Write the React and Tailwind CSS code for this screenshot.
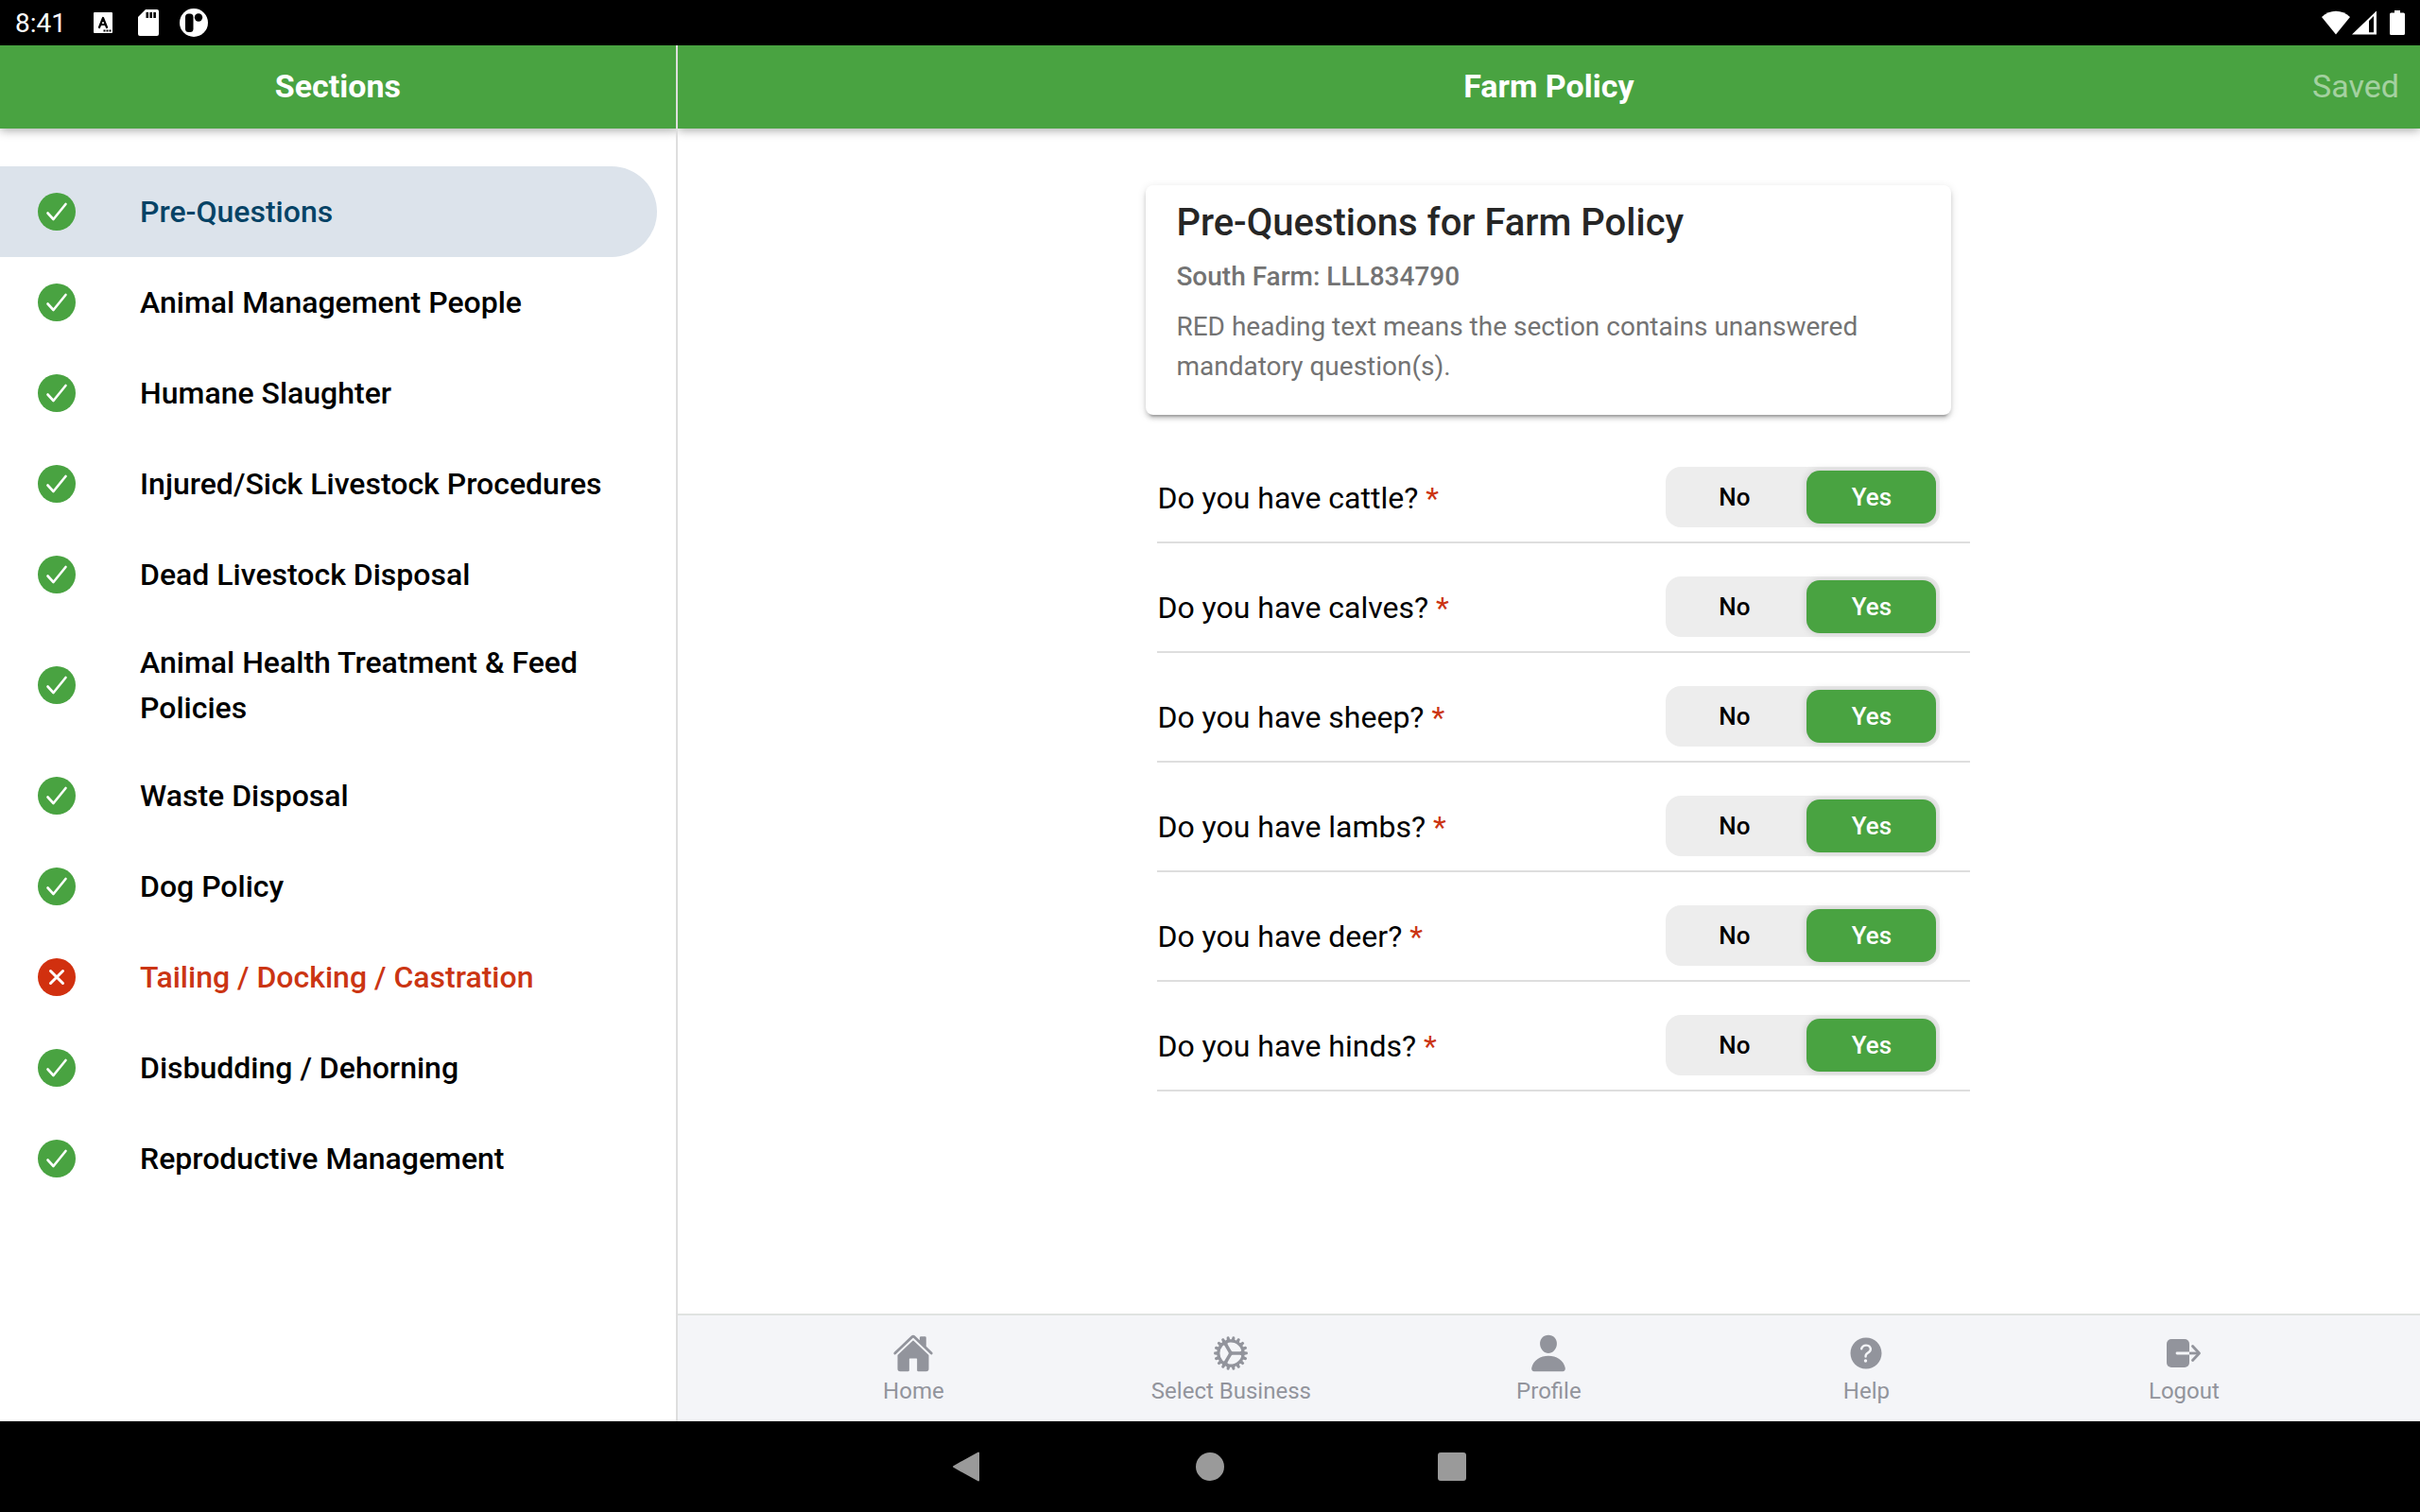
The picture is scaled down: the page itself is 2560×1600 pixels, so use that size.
import React, { useState } from 'react';
import { IoHome, IoCog, IoPerson, IoHelpCircle } from 'react-icons/io5';

const sections = [
  { name: 'Pre-Questions', complete: true },
  { name: 'Animal Management People', complete: true },
  { name: 'Humane Slaughter', complete: true },
  { name: 'Injured/Sick Livestock Procedures', complete: true },
  { name: 'Dead Livestock Disposal', complete: true },
  { name: 'Animal Health Treatment & Feed Policies', complete: true },
  { name: 'Waste Disposal', complete: true },
  { name: 'Dog Policy', complete: true },
  { name: 'Tailing / Docking / Castration', complete: false },
  { name: 'Disbudding / Dehorning', complete: true },
  { name: 'Reproductive Management', complete: true },
];

const animals = ['cattle', 'calves', 'sheep', 'lambs', 'deer', 'hinds'];

const LogoutIcon = ({ className }) => (
  <svg viewBox="0 0 44 44" className={className} fill="none" stroke="currentColor" strokeWidth="2.8" strokeLinecap="round" strokeLinejoin="round">
    <rect x="4" y="7" width="24" height="30" rx="5" fill="currentColor" stroke="none" />
    <path d="M15 22h13" stroke="#f4f5f8" />
    <path d="M28 22h10" strokeLinecap="butt" />
    <path d="M31.500 14.500l7 7.500l-7 7.500" />
  </svg>
);

const tabs = [
  { label: 'Home', icon: IoHome },
  { label: 'Select Business', icon: IoCog },
  { label: 'Profile', icon: IoPerson },
  { label: 'Help', icon: IoHelpCircle },
  { label: 'Logout', icon: LogoutIcon },
];

const StatusBar = () => (
  <div className="flex h-12 items-center justify-between bg-black px-4 text-white">
    <div className="flex items-center">
      <span className="w-[83px] pt-0.5 text-[28px] leading-none">8:41</span>
      {/* Keyboard */}
      <svg viewBox="0 0 20 22" className="h-[22px] w-5">
        <rect width="20" height="22" rx="1" fill="#fff" />
        <path d="M6 16L10 6L14 16M7.500 13h5" fill="none" stroke="#000" strokeWidth="2.200" strokeLinecap="round" strokeLinejoin="round" />
        <path d="M10.500 18.500h2v2h-2zM13.500 18.500h2v2h-2zM16.500 18.500h2v2h-2z" fill="#000" />
      </svg>
      {/* SD card */}
      <svg viewBox="0 0 22 28" className="ml-[27px] h-7 w-[22px]">
        <path d="M8 0h12a2 2 0 012 2v24a2 2 0 01-2 2H2a2 2 0 01-2-2V8z" fill="#fff" />
        <path d="M8.500 3h2.600v6H8.500zM12.400 3H15v6h-2.600zM16.300 3h2.600v6h-2.600z" fill="#000" />
      </svg>
      <svg viewBox="0 0 30 30" className="ml-[22px] size-[30px]">
        <circle cx="15" cy="15" r="15" fill="#fff" />
        <rect x="6" y="5.500" width="8.500" height="19.500" rx="3.500" fill="#000" />
        <circle cx="20" cy="9.500" r="4.200" fill="#000" />
      </svg>
    </div>
    <div className="flex items-center">
      <svg viewBox="0 0 30 26" className="h-[26px] w-[30px]" fill="#fff">
        <path d="M15 25.500L0 7C4.500 2.800 9.500 .8 15 .8S25.500 2.800 30 7z" />
      </svg>
      <svg viewBox="0 0 26 26" className="ml-0.5 h-[26px] w-[26px]" fill="#fff" fillRule="evenodd">
        <path d="M26 .5V25.500H0zM18 11v12.200h5V6z" />
      </svg>
      <svg viewBox="0 0 16 26" className="ml-3.5 h-[26px] w-4" fill="#fff">
        <path d="M5 0h6v2.500h3.500A1.500 1.500 0 0116 4v20.500a1.500 1.500 0 01-1.500 1.500h-13A1.500 1.500 0 010 24.500V4a1.500 1.500 0 011.500-1.500H5z" />
      </svg>
    </div>
  </div>
);

const SectionIcon = ({ complete }) => (
  <svg viewBox="0 0 40 40" className="size-10 shrink-0" fill="none" stroke="#fff" strokeLinecap="round" strokeLinejoin="round">
    <circle cx="20" cy="20" r="20" fill={complete ? '#49a341' : '#d1300f'} stroke="none" />
    {complete ? (
      <path d="M10.500 21.500L16.500 28L29.500 12" strokeWidth="2.600" />
    ) : (
      <path d="M13.500 13.500l13 13M26.500 13.500l-13 13" strokeWidth="3" />
    )}
  </svg>
);

const Question = ({ animal, value, onChange }) => (
  <div
    role="radiogroup"
    aria-labelledby={`${animal}-question`}
    className="flex items-center justify-between border-b-2 border-[#dedede] pt-[35px] pr-8 pb-[15px]"
  >
    <span id={`${animal}-question`} className="pt-0.5 text-[32px] leading-[48px] text-black">
      Do you have {animal}? <span className="text-[#cb3513]">*</span>
    </span>
    <div className="grid h-16 w-[290px] grid-cols-2 rounded-2xl bg-[#ededed] text-[26px] font-medium">
      {['No', 'Yes'].map((option) => (
        <label
          key={option}
          className={`m-1 grid cursor-pointer place-items-center rounded-[14px] ${
            value === option ? 'bg-[#49a341] text-white shadow-[0_0_8px_rgba(0,0,0,0.16)]' : 'text-black'
          }`}
        >
          <input
            type="radio"
            name={animal}
            value={option}
            checked={value === option}
            onChange={() => onChange(option)}
            className="col-start-1 row-start-1 size-full cursor-pointer appearance-none rounded-[14px]"
          />
          <span className="col-start-1 row-start-1">{option}</span>
        </label>
      ))}
    </div>
  </div>
);

const App = () => {
  const [selected, setSelected] = useState('Pre-Questions');
  const [answers, setAnswers] = useState({});

  return (
    <div className="flex min-h-screen flex-col bg-white font-['Roboto',sans-serif]">
      <StatusBar />

      <div className="flex grow">
        {/* Sections menu */}
        <aside className="z-10 flex w-[28%] shrink-0 flex-col overflow-hidden border-r-2 border-[#dedede]">
          <header className="flex h-[88px] items-center justify-center bg-[#49a341] pb-0.5 shadow-[0_2px_10px_rgba(0,0,0,0.35)]">
            <h2 className="text-[34px] font-bold text-white">Sections</h2>
          </header>
          <nav className="mt-10 pr-5">
            {sections.map(({ name, complete }) => (
              <button
                key={name}
                type="button"
                onClick={() => setSelected(name)}
                className={`flex min-h-24 w-full items-center gap-[68px] rounded-r-full py-[21px] pr-8 pl-10 text-left text-[32px] leading-[48px] font-medium ${
                  selected === name ? 'bg-[#dce3eb] text-[#074366]' : complete ? 'text-black' : 'text-[#cb3513]'
                }`}
              >
                <SectionIcon complete={complete} />
                <span>{name}</span>
              </button>
            ))}
          </nav>
        </aside>

        <div className="flex grow flex-col">
          <header className="grid h-[88px] grid-cols-[1fr_auto_1fr] items-center bg-[#49a341] px-[22px] pb-0.5 text-[34px] text-white shadow-[0_2px_10px_rgba(0,0,0,0.35)]">
            <h1 className="col-start-2 font-bold">Farm Policy</h1>
            <button type="button" disabled className="justify-self-end opacity-50">
              Saved
            </button>
          </header>

          <main className="mx-auto w-full max-w-[892px] grow pt-[60px]">
            <section className="mx-5 rounded-lg px-8 pt-4 pb-[30px] shadow-[0_6px_2px_-4px_rgba(0,0,0,0.2),0_4px_4px_rgba(0,0,0,0.14),0_2px_10px_rgba(0,0,0,0.12)]">
              <h2 className="text-[40px] leading-[48px] font-medium text-[#262626]">Pre-Questions for Farm Policy</h2>
              <h3 className="mt-3 text-[28px] leading-[42px] font-medium text-[#737373]">South Farm: LLL834790</h3>
              <p className="mt-[11px] text-[28px] leading-[42px] text-[#737373]">
                RED heading text means the section contains unanswered mandatory question(s).
              </p>
            </section>

            <form className="mt-5 pl-8">
              {animals.map((animal) => (
                <Question
                  key={animal}
                  animal={animal}
                  value={answers[animal] || 'Yes'}
                  onChange={(option) => setAnswers({ ...answers, [animal]: option })}
                />
              ))}
            </form>
          </main>

          <nav className="flex h-[114px] justify-center border-t-2 border-[#e0e3e1] bg-[#f4f5f8]">
            {tabs.map(({ label, icon: Icon }) => (
              <a key={label} href="#" className="flex w-[336px] flex-col items-center pt-[18px] text-2xl text-[#92949c]">
                <Icon className="size-11" />
                <span className="mt-0.5">{label}</span>
              </a>
            ))}
          </nav>
        </div>
      </div>

      {/* System navigation */}
      <div className="flex h-24 items-center justify-center bg-black">
        <button type="button" aria-label="Back" className="flex w-64 justify-center">
          <svg viewBox="0 0 32 32" className="size-8">
            <path d="M1 16L27 1.500V30.500z" fill="#9a9a9a" stroke="#9a9a9a" strokeWidth="2" strokeLinejoin="round" />
          </svg>
        </button>
        <button type="button" aria-label="Home screen" className="flex w-64 justify-center">
          <span className="size-[30px] rounded-full bg-[#9a9a9a]" />
        </button>
        <button type="button" aria-label="Recent apps" className="flex w-64 justify-center">
          <span className="size-[30px] rounded-[3px] bg-[#9a9a9a]" />
        </button>
      </div>
    </div>
  );
};

export default App;
